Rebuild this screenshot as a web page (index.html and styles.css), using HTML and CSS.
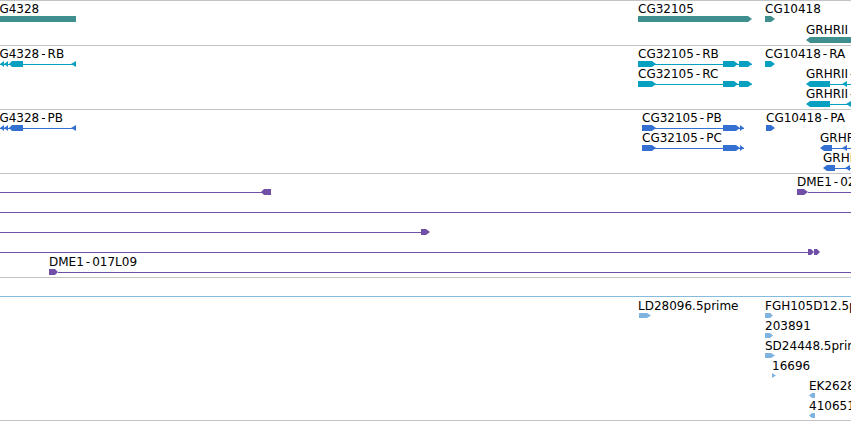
FILE: index.html
```html
<!DOCTYPE html>
<html lang="en">
<head>
    <meta charset="UTF-8">
    <title>Genome tracks</title>
    <link rel="stylesheet" href="styles.css">
</head>
<body>
    <div class="tracks">
        <!-- Genes -->
        <div class="track track-genes">
            <svg class="glyphs" width="851" height="44">
                <g transform="translate(0,-1)" fill="#408f8f">
                    <rect x="-10" y="16" width="86" height="6"/>
                    <polygon points="638,16 748,16 752,19 748,22 638,22"/>
                    <polygon points="765,16 771,16 775,19 771,22 765,22"/>
                    <polygon points="806,40 810,37 860,37 860,43 810,43"/>
                </g>
            </svg>
            <span class="label" style="left:-9px;top:1px">CG4328</span>
            <span class="label" style="left:638px;top:1px">CG32105</span>
            <span class="label" style="left:765px;top:1px">CG10418</span>
            <span class="label" style="left:806px;top:22px">GRHRII</span>
        </div>

        <!-- Transcripts -->
        <div class="track track-mrna">
            <svg class="glyphs" width="851" height="63">
                <g transform="translate(0,-46)" fill="#08a0c0">
                    <rect x="0" y="64" width="76" height="1"/>
                    <polygon points="0,64 4,61 4,67"/>
                    <polygon points="4,64 8,61 8,67"/>
                    <polygon points="9,64 12,61 23,61 23,67 12,67"/>
                    <polygon points="71,64 76,61 76,67"/>

                    <rect x="638" y="64" width="114" height="1"/>
                    <polygon points="638,61 652,61 656,64 652,67 638,67"/>
                    <polygon points="723,61 734,61 738,64 734,67 723,67"/>
                    <polygon points="739,61 748,61 752,64 748,67 739,67"/>
                    <polygon points="765,61 771,61 775,64 771,67 765,67"/>

                    <rect x="638" y="84" width="114" height="1"/>
                    <polygon points="638,81 652,81 656,84 652,87 638,87"/>
                    <polygon points="723,81 734,81 738,84 734,87 723,87"/>
                    <polygon points="739,81 748,81 752,84 748,87 739,87"/>

                    <rect x="830" y="84" width="30" height="1"/>
                    <polygon points="806,84 810,81 830,81 830,87 810,87"/>
                    <polygon points="842,84 847,81 847,87"/>

                    <rect x="830" y="104" width="30" height="1"/>
                    <polygon points="806,104 810,101 830,101 830,107 810,107"/>
                    <polygon points="846,104 851,101 851,107"/>
                </g>
            </svg>
            <span class="label" style="left:-9px;top:1px">CG4328<span class="dash">-</span>RB</span>
            <span class="label" style="left:638px;top:1px">CG32105<span class="dash">-</span>RB</span>
            <span class="label" style="left:765px;top:1px">CG10418<span class="dash">-</span>RA</span>
            <span class="label" style="left:638px;top:21px">CG32105<span class="dash">-</span>RC</span>
            <span class="label" style="left:806px;top:21px">GRHRII<span class="dash">-</span>RA</span>
            <span class="label" style="left:806px;top:41px">GRHRII<span class="dash">-</span>RB</span>
        </div>

        <!-- CDS -->
        <div class="track track-cds">
            <svg class="glyphs" width="851" height="63">
                <g transform="translate(0,-110)" fill="#3470d2">
                    <rect x="0" y="128" width="76" height="1"/>
                    <polygon points="0,128 4,125 4,131"/>
                    <polygon points="4,128 8,125 8,131"/>
                    <polygon points="9,128 12,125 23,125 23,131 12,131"/>
                    <polygon points="71,128 76,125 76,131"/>

                    <rect x="642" y="128" width="102" height="1"/>
                    <polygon points="642,125 652,125 656,128 652,131 642,131"/>
                    <polygon points="723,125 736,125 740,128 736,131 723,131"/>
                    <polygon points="740,125 744,128 740,131"/>
                    <polygon points="766,125 771,125 775,128 771,131 766,131"/>

                    <rect x="642" y="148" width="102" height="1"/>
                    <polygon points="642,145 652,145 656,148 652,151 642,151"/>
                    <polygon points="723,145 736,145 740,148 736,151 723,151"/>
                    <polygon points="740,145 744,148 740,151"/>

                    <rect x="832" y="148" width="30" height="1"/>
                    <polygon points="820,148 824,145 832,145 832,151 824,151"/>
                    <polygon points="842,148 847,145 847,151"/>

                    <rect x="835" y="168" width="30" height="1"/>
                    <polygon points="823,168 827,165 835,165 835,171 827,171"/>
                    <polygon points="845,168 850,165 850,171"/>
                </g>
            </svg>
            <span class="label" style="left:-9px;top:1px">CG4328<span class="dash">-</span>PB</span>
            <span class="label" style="left:642px;top:1px">CG32105<span class="dash">-</span>PB</span>
            <span class="label" style="left:766px;top:1px">CG10418<span class="dash">-</span>PA</span>
            <span class="label" style="left:642px;top:21px">CG32105<span class="dash">-</span>PC</span>
            <span class="label" style="left:820px;top:21px">GRHRII<span class="dash">-</span>PA</span>
            <span class="label" style="left:823px;top:41px">GRHRII<span class="dash">-</span>PB</span>
        </div>

        <!-- cDNA clones -->
        <div class="track track-clones">
            <svg class="glyphs" width="851" height="103">
                <g transform="translate(0,-174)" fill="#7050a6">
                    <rect x="0" y="192" width="262" height="1"/>
                    <polygon points="261,192 264,189 271,189 271,195 264,195"/>

                    <rect x="808" y="192" width="50" height="1"/>
                    <polygon points="797,189 804,189 808,192 804,195 797,195"/>

                    <rect x="0" y="212" width="860" height="1"/>

                    <rect x="0" y="232" width="422" height="1"/>
                    <polygon points="421,229 426,229 430,232 426,235 421,235"/>

                    <rect x="0" y="252" width="808" height="1"/>
                    <polygon points="808,249 811,249 814,252 811,255 808,255"/>
                    <polygon points="814,249 817,249 820,252 817,255 814,255"/>

                    <rect x="58" y="272" width="800" height="1"/>
                    <polygon points="49,269 55,269 58,272 55,275 49,275"/>
                </g>
            </svg>
            <span class="label" style="left:797px;top:1px">DME1<span class="dash">-</span>027F03</span>
            <span class="label" style="left:49px;top:81px">DME1<span class="dash">-</span>017L09</span>
        </div>

        <div class="track-gap"></div>

        <!-- ESTs -->
        <div class="track track-ests">
            <svg class="glyphs" width="851" height="123">
                <g transform="translate(0,-297)" fill="#80b4e0">
                    <polygon points="639,313 647,313 651,315.5 647,318 639,318"/>
                    <polygon points="765,313 770,313 773,315.5 770,318 765,318"/>
                    <polygon points="765,333 770,333 773,335.5 770,338 765,338"/>
                    <polygon points="765,353 771,353 775,355.5 771,358 765,358"/>
                    <polygon points="772,373 776,375.5 772,378"/>
                    <polygon points="809,395.5 812,393 815,393 815,398 812,398"/>
                    <polygon points="809,415.5 812,413 815,413 815,418 812,418"/>
                </g>
            </svg>
            <span class="label" style="left:638px;top:2px">LD28096.5prime</span>
            <span class="label" style="left:765px;top:2px">FGH105D12.5prime</span>
            <span class="label" style="left:765px;top:22px">203891</span>
            <span class="label" style="left:765px;top:42px">SD24448.5prime</span>
            <span class="label" style="left:772px;top:62px">16696</span>
            <span class="label" style="left:809px;top:82px">EK262808</span>
            <span class="label" style="left:809px;top:102px">410651</span>
        </div>
    </div>
</body>
</html>
```

FILE: styles.css
```css
body {
    margin: 0;
    padding: 0;
    overflow: hidden;
    background-color: #fff;
    font-family: "DejaVu Sans", sans-serif;
}
.tracks {
    width: 851px;
}
.track {
    position: relative;
    overflow: hidden;
    border-bottom: 1px solid #c4c4c4;
}
.track-genes {
    height: 44px;
    border-top: 1px solid #c4c4c4;
}
.track-mrna, .track-cds {
    height: 63px;
}
.track-clones {
    height: 103px;
}
.track-gap {
    height: 18px;
}
.track-ests {
    height: 123px;
    border-top: 1px solid #84bce0;
}
.glyphs {
    position: absolute;
    left: 0;
    top: 0;
    display: block;
}
.label {
    position: absolute;
    font-size: 12px;
    line-height: 14px;
    color: #000;
    white-space: nowrap;
}
.label .dash {
    margin: 0 2px;
}
```
